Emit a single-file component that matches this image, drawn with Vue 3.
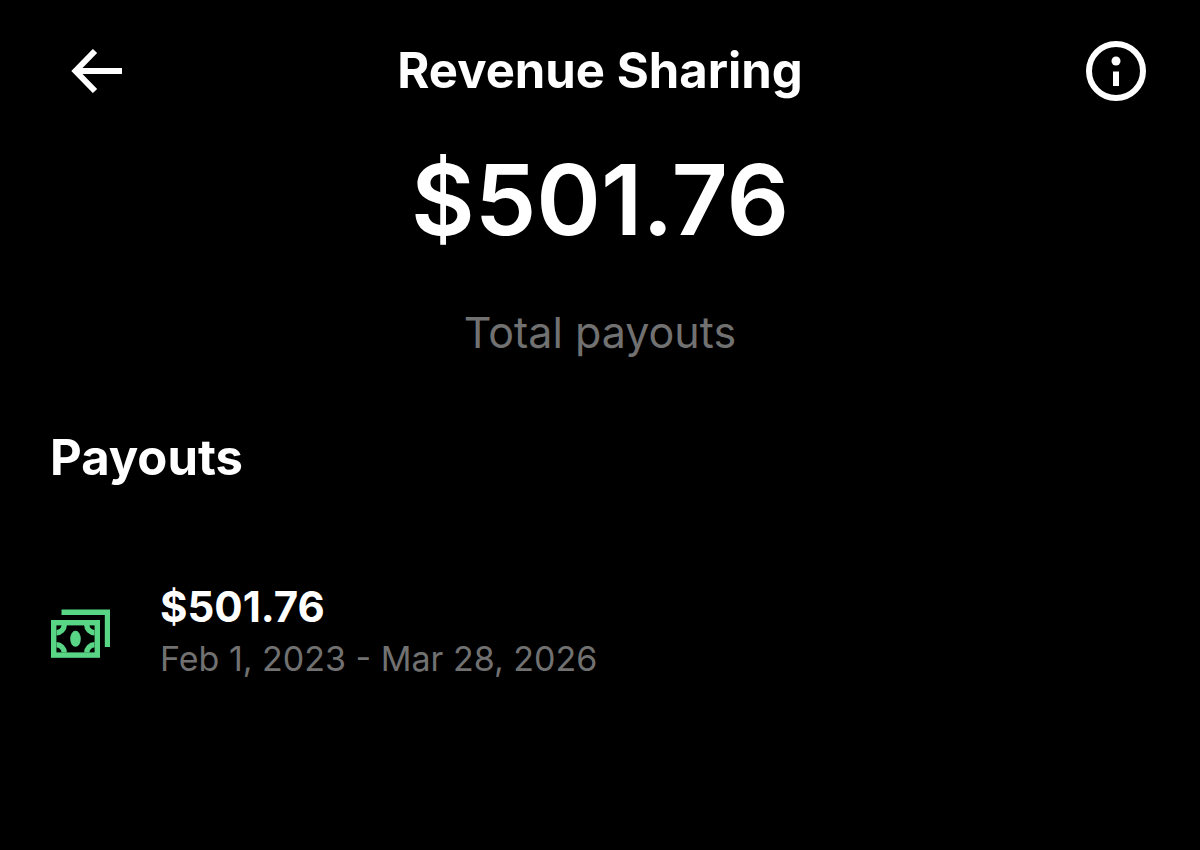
<template>
  <main class="revenue-page">
    <header class="page-header">
      <button class="icon-button" type="button" aria-label="Back">
        <svg class="back-icon" viewBox="0 0 52 44" aria-hidden="true">
          <path d="M24 2 4.5 22 24 42M4 22H51" />
        </svg>
      </button>
      <h1 class="page-title">Revenue Sharing</h1>
      <button class="icon-button info-button" type="button" aria-label="About revenue sharing">
        <svg class="info-icon" viewBox="0 0 60 60" aria-hidden="true">
          <circle class="ring" cx="30" cy="30" r="27" />
          <circle cx="30" cy="20" r="4.5" />
          <path d="M27 30.5h6v14.5h-6z" />
        </svg>
      </button>
    </header>

    <section class="total">
      <p class="total-amount">{{ total }}</p>
      <p class="total-label">Total payouts</p>
    </section>

    <section class="payouts">
      <h2 class="section-title">Payouts</h2>
      <ul class="payout-list">
        <li v-for="payout in payouts" :key="payout.period" class="payout">
          <svg class="cash-icon" viewBox="0 0 60 50" aria-hidden="true">
            <path d="M11.5 3.2H57.5V38" />
            <rect x="3.7" y="13.7" width="43.6" height="32.4" />
            <path d="M14.2 16A7.7 7.7 0 0 1 6.5 23.7M36.8 16A7.7 7.7 0 0 0 44.5 23.7M6.5 35.8A7.7 7.7 0 0 1 14.2 43.5M44.5 35.8A7.7 7.7 0 0 0 36.8 43.5" />
            <ellipse cx="25.5" cy="29.8" rx="5.3" ry="8" />
          </svg>
          <div class="payout-text">
            <span class="payout-amount">{{ payout.amount }}</span>
            <span class="payout-period">{{ payout.period }}</span>
          </div>
        </li>
      </ul>
    </section>
  </main>
</template>

<script setup>
const total = '$501.76'

const payouts = [
  { amount: '$501.76', period: 'Feb 1, 2023 - Mar 28, 2026' }
]
</script>

<style>
body {
  margin: 0;
  background: #000;
}
</style>

<style scoped>
.revenue-page {
  min-height: 100vh;
  box-sizing: border-box;
  background: #000;
  color: #fff;
  font-family: Inter, 'Liberation Sans', sans-serif;
}

.page-header {
  display: flex;
  justify-content: space-between;
  align-items: center;
  padding: 41px 54px 0;
}

.page-title,
.section-title {
  margin: 0;
  font-size: 49px;
  line-height: 60px;
  font-weight: 700;
}

.icon-button {
  display: flex;
  align-items: center;
  justify-content: center;
  width: 86px;
  height: 60px;
  padding: 0;
  border: 0;
  background: none;
  color: inherit;
  cursor: pointer;
}

.info-button {
  justify-content: flex-end;
}

.back-icon {
  width: 52px;
  height: 44px;
  fill: none;
  stroke: currentColor;
  stroke-width: 6;
}

.info-icon {
  width: 60px;
  height: 60px;
  fill: currentColor;
}

.info-icon .ring {
  fill: none;
  stroke: currentColor;
  stroke-width: 6;
}

.total {
  padding-top: 39px;
  text-align: center;
}

.total-amount {
  margin: 0;
  font-size: 98px;
  line-height: 120px;
  font-weight: 600;
}

.total-label {
  margin: 42px 0 0;
  font-size: 43px;
  line-height: 60px;
  color: #717171;
}

.payouts {
  padding: 66px 50px 0;
}

.payout-list {
  margin: 0;
  padding: 93px 0 0;
  list-style: none;
}

.payout {
  display: flex;
  align-items: flex-end;
  gap: 50px;
}

.cash-icon {
  flex: none;
  width: 60px;
  height: 50px;
  padding-bottom: 26px;
  fill: none;
  stroke: #58d686;
  stroke-width: 5.4;
}

.cash-icon ellipse {
  fill: #58d686;
  stroke: none;
}

.payout-text {
  display: flex;
  flex-direction: column;
}

.payout-amount {
  font-size: 42px;
  line-height: 52px;
  font-weight: 700;
}

.payout-period {
  font-size: 34px;
  line-height: 52px;
  color: #717171;
}
</style>
